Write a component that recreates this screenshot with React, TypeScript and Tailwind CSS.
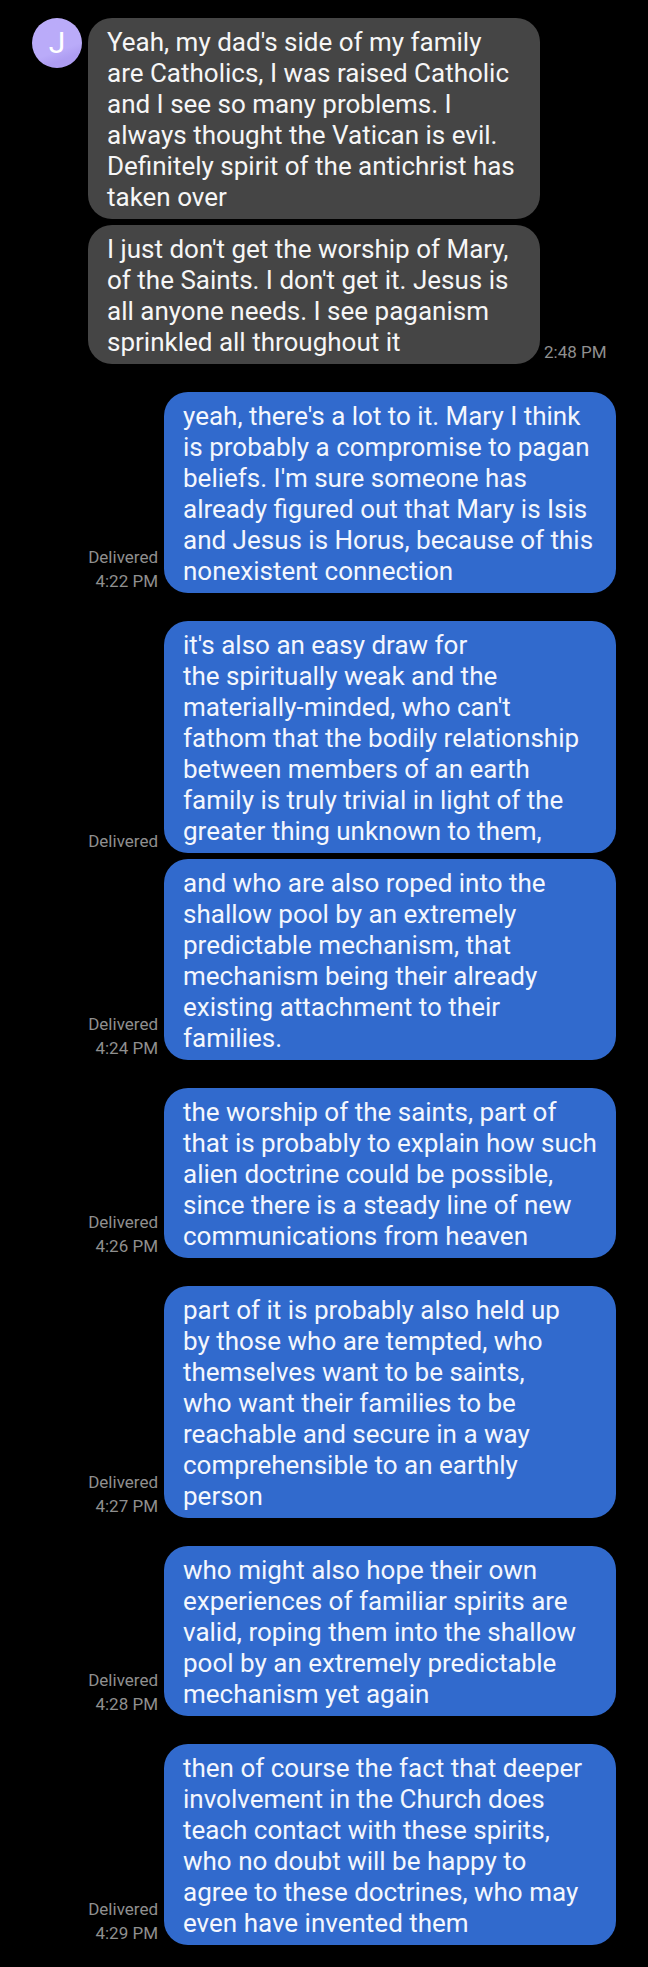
type Message = {
  text: string;
  sent: boolean;
  status?: string;
  time?: string;
};

const groups: Message[][] = [
  [
    {
      sent: false,
      text: "Yeah, my dad's side of my family are Catholics, I was raised Catholic and I see so many problems. I always thought the Vatican is evil. Definitely spirit of the antichrist has taken over",
    },
    {
      sent: false,
      text: "I just don't get the worship of Mary, of the Saints. I don't get it. Jesus is all anyone needs. I see paganism sprinkled all throughout it",
      time: "2:48 PM",
    },
  ],
  [
    {
      sent: true,
      text: "yeah, there's a lot to it. Mary I think is probably a compromise to pagan beliefs. I'm sure someone has already figured out that Mary is Isis and Jesus is Horus, because of this nonexistent connection",
      status: "Delivered",
      time: "4:22 PM",
    },
  ],
  [
    {
      sent: true,
      text: "it's also an easy draw for the\u00a0spiritually weak and the materially-minded, who can't fathom that the bodily relationship between members of an earth family is truly trivial in light of the greater thing unknown to them,",
      status: "Delivered",
    },
    {
      sent: true,
      text: "and who are also roped into the shallow pool by an extremely predictable mechanism, that mechanism being their already existing attachment to their families.",
      status: "Delivered",
      time: "4:24 PM",
    },
  ],
  [
    {
      sent: true,
      text: "the worship of the saints, part of that is probably to explain how such alien doctrine could be possible, since there is a steady line of new communications from heaven",
      status: "Delivered",
      time: "4:26 PM",
    },
  ],
  [
    {
      sent: true,
      text: "part of it is probably also held up by\u00a0those who are tempted, who themselves want to be saints, who\u00a0want their families to be reachable and secure in a way comprehensible to an earthly person",
      status: "Delivered",
      time: "4:27 PM",
    },
  ],
  [
    {
      sent: true,
      text: "who might also hope their own experiences of familiar spirits are valid, roping them into the shallow pool by an extremely predictable mechanism yet again",
      status: "Delivered",
      time: "4:28 PM",
    },
  ],
  [
    {
      sent: true,
      text: "then of course the fact that deeper involvement in the Church does teach contact with these spirits, who no doubt will be happy to agree\u00a0to these doctrines, who may even have invented them",
      status: "Delivered",
      time: "4:29 PM",
    },
  ],
];

function Avatar() {
  return (
    <div className="flex size-[50px] items-center justify-center rounded-full bg-linear-160 from-[#baabf9] from-62% to-[#ae9df2] to-78% text-[30px] leading-none text-white">
      J
    </div>
  );
}

function Meta({ status, time }: Pick<Message, "status" | "time">) {
  return (
    <div className="flex shrink-0 flex-col items-end text-[17px] leading-6 whitespace-nowrap text-[#8f8f8f]">
      {status && <span>{status}</span>}
      {time && <time>{time}</time>}
    </div>
  );
}

function Bubble({ message, first }: { message: Message; first: boolean }) {
  const { text, sent, status, time } = message;
  if (sent) {
    return (
      <li className="flex items-end justify-end gap-1.5">
        <Meta status={status} time={time} />
        <p className="max-w-[452px] min-w-0 flex-1 rounded-3xl bg-[#316acd] pt-[9px] pr-4 pb-1.5 pl-[19px] text-[26px] leading-[31px] text-[#f4f7fd]">
          {text}
        </p>
      </li>
    );
  }
  return (
    <li className="flex items-end">
      <div className="mr-1.5 w-[50px] shrink-0 self-start">{first && <Avatar />}</div>
      <p className="mr-1 max-w-[452px] min-w-0 flex-1 rounded-3xl bg-[#454545] pt-[9px] pr-4 pb-1.5 pl-[19px] text-[26px] leading-[31px] text-[#f6f6f6]">
        {text}
      </p>
      <Meta time={time} />
    </li>
  );
}

export default function App() {
  return (
    <main className="min-h-screen bg-black px-8 pt-[18px] pb-5 font-[Roboto,'Liberation_Sans',sans-serif]">
      <div className="flex flex-col gap-7">
        {groups.map((group, g) => (
          <ul key={g} className="flex flex-col gap-1.5">
            {group.map((message, i) => (
              <Bubble key={i} message={message} first={i === 0} />
            ))}
          </ul>
        ))}
      </div>
    </main>
  );
}
